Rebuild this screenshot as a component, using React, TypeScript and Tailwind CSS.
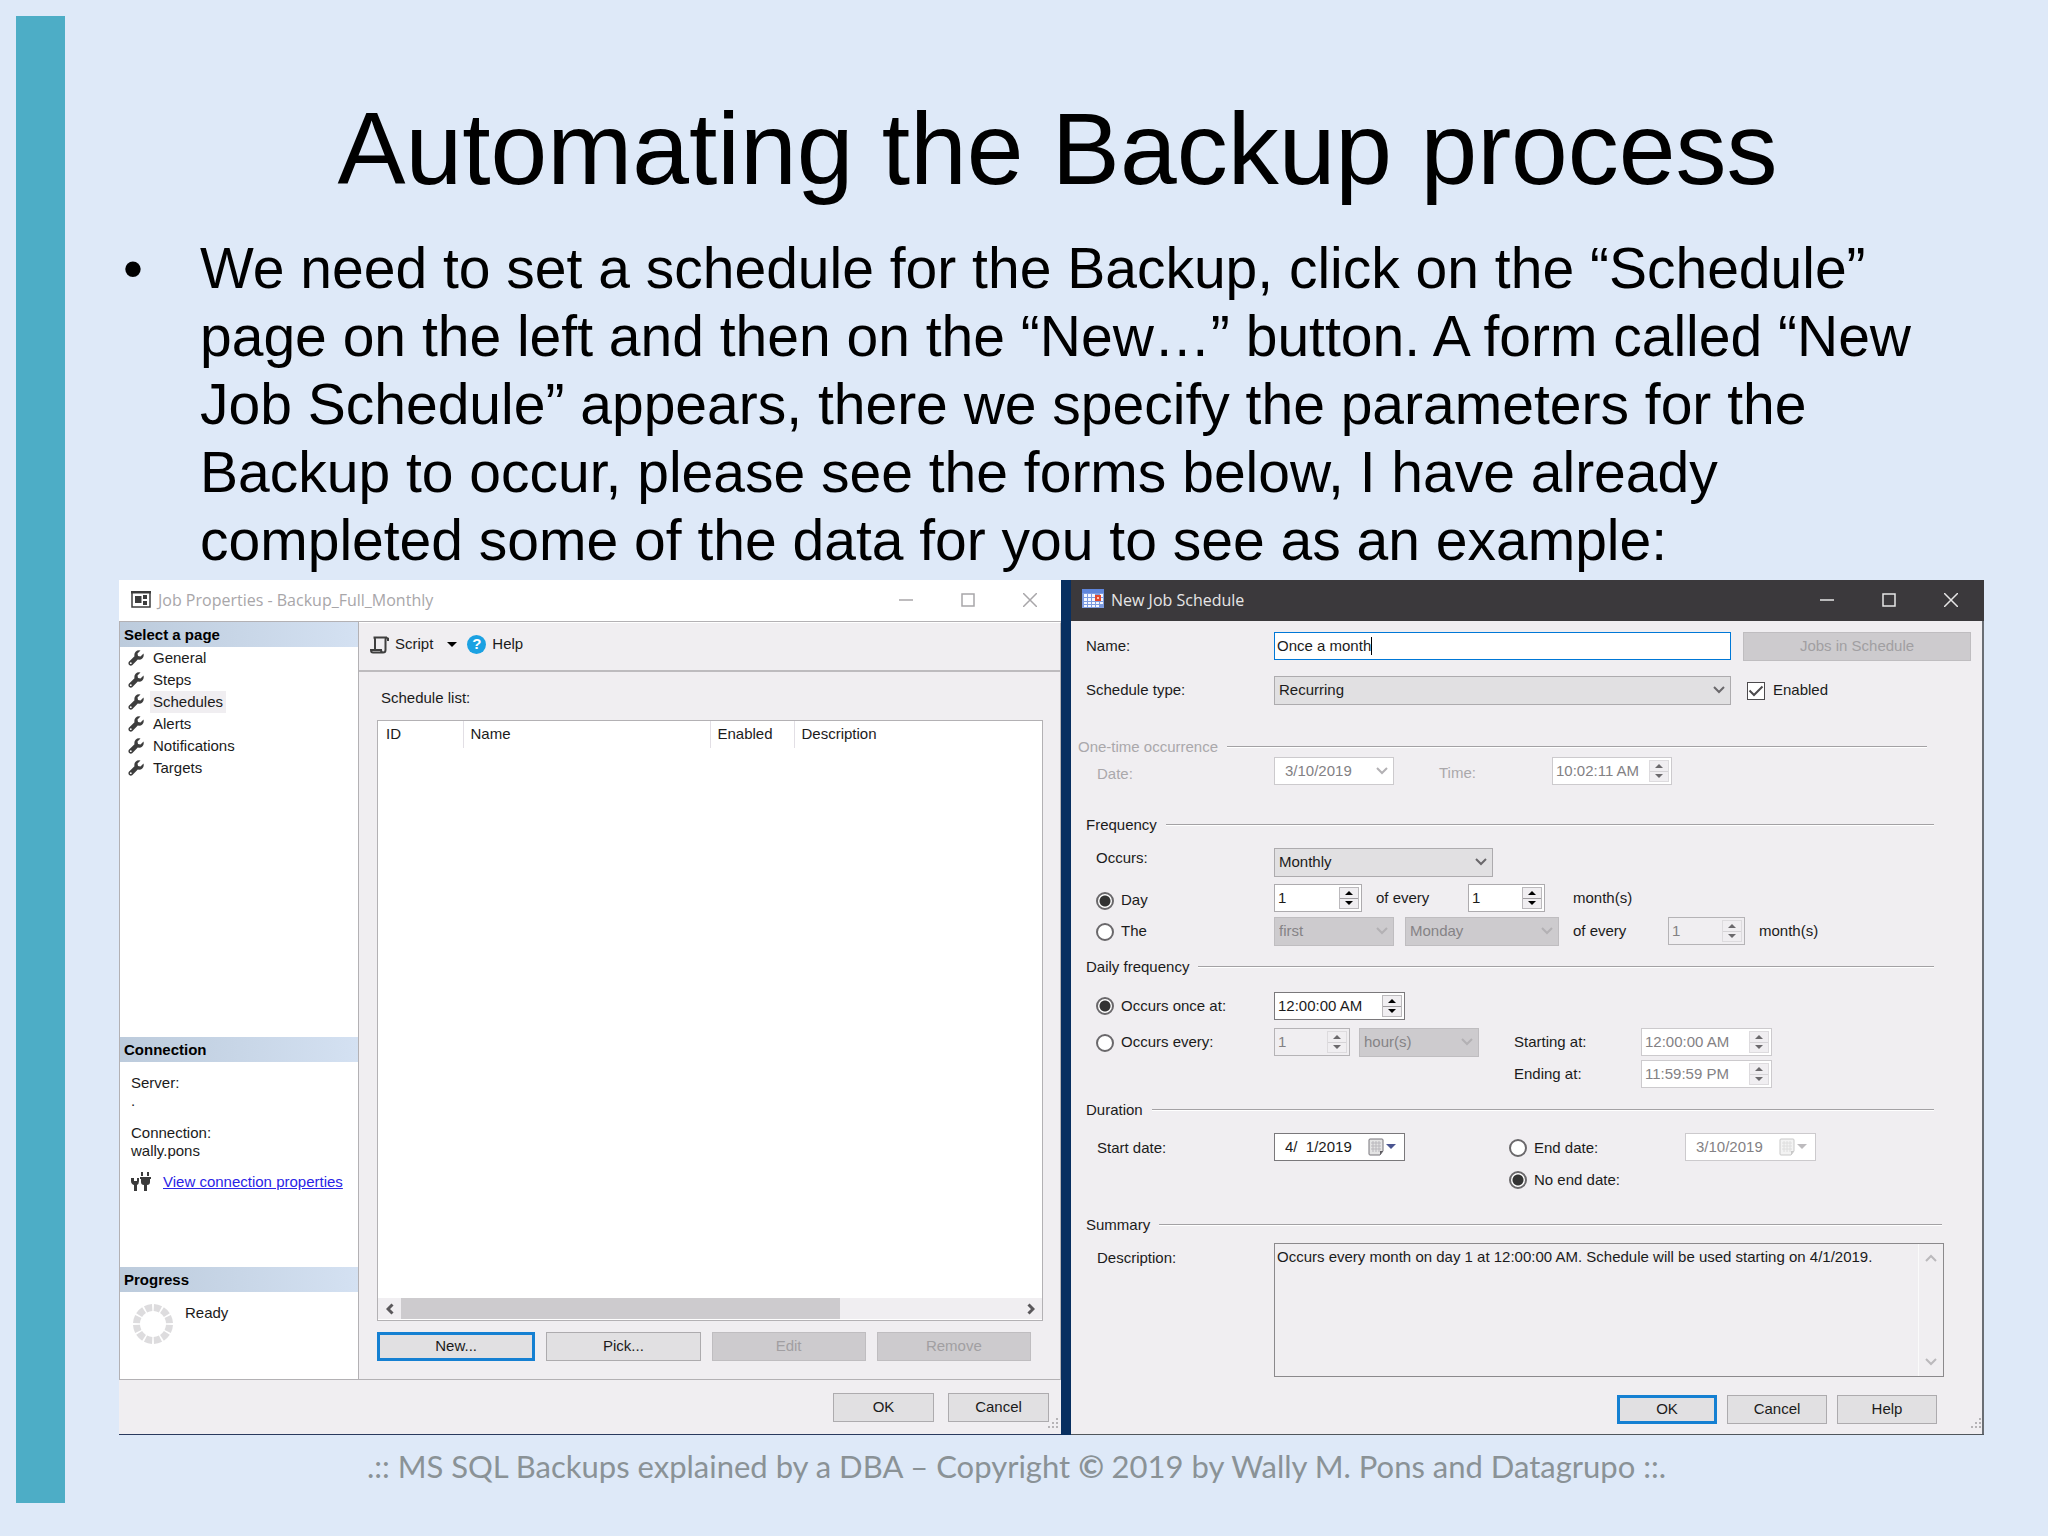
import React from 'react';

const pages = ['General', 'Steps', 'Schedules', 'Alerts', 'Notifications', 'Targets'];

const Chevron: React.FC<{ className?: string; up?: boolean }> = ({ className = '', up }) => (
  <svg viewBox="0 0 12 8" className={`h-2 w-3 ${className}`} fill="none" stroke="currentColor" strokeWidth="2">
    <path d={up ? 'M1 7l5-5 5 5' : 'M1 1l5 5 5-5'} />
  </svg>
);

const BoldChevron: React.FC<{ className?: string }> = ({ className = '' }) => (
  <svg viewBox="0 0 12 8" className={`h-2 w-3 ${className}`} fill="none" stroke="currentColor" strokeWidth="3">
    <path d="M1.500 1.500l4.500 4.500 4.500-4.500" />
  </svg>
);

const WrenchIcon = () => (
  <svg viewBox="0 0 16 16" className="h-4 w-4" fill="#3d3d3d">
    <path d="M12.500 0.500L9.500 3.500L10 6L12.500 6.500L15.500 3.500Q16.300 6.500 14.300 8.500Q12.500 10.200 9.800 9.600L4.200 15.200Q2.800 16.200 1.200 15Q-0.200 13.300 0.900 11.800L6.500 6.300Q5.900 3.500 7.600 1.700Q9.600-0.200 12.500 0.500Z" />
    <circle cx="2.800" cy="13.200" r="0.900" fill="#fff" />
  </svg>
);

const JobIcon = () => (
  <svg viewBox="0 0 20 17" className="h-[17px] w-5">
    <path d="M1 2v14h18V2" fill="none" stroke="#3c3c3c" strokeWidth="1.5" />
    <path d="M0 0h20v2.500H0z" fill="#3c3c3c" />
    <path d="M4 5h6.500v7H4zM12 4h4v4h-4zM12 10h4v4h-4z" fill="#3c3c3c" />
  </svg>
);

const ScriptIcon = () => (
  <svg viewBox="0 0 20 18" className="h-[18px] w-5" fill="none" stroke="#3f3f3f" strokeWidth="2">
    <path d="M5 13V3.500Q5 1.500 3.500 1.500H17Q15.500 1.500 15.500 4V14Q15.500 16.500 13 16.500H3Q1 16.500 1 14H11Q11 16.500 13.500 16.500" />
    <path d="M17 1v4h2V2z" fill="#3f3f3f" stroke="none" />
  </svg>
);

const ScheduleIcon = () => (
  <svg viewBox="0 0 22 21" className="h-[21px] w-[22px]">
    <path d="M0 0h22v19H0z" fill="#7c9be0" />
    <path d="M0 0h22v4H0z" fill="#5f86dc" />
    <path d="M2 5h3v3H2zM6 5h3v3H6zM10 5h3v3h-3zM18 5h3v3h-3zM2 9h3v3H2zM6 9h3v3H6zM10 9h3v3h-3zM18 9h3v3h-3zM2 13h3v2H2zM6 13h3v2H6zM10 13h3v2h-3zM14 13h3v2h-3zM18 13h3v2h-3zM2 16h3v2H2zM6 16h3v2H6zM10 16h3v2h-3zM14 16h3v2h-3z" fill="#f4f7ff" />
    <path d="M13 6h6v6h-6z" fill="#e2492f" />
    <path d="M15 8h2v2h-2z" fill="#ffc2a8" />
  </svg>
);

const ConnectionIcon = () => (
  <svg viewBox="0 0 20 20" className="h-5 w-5" fill="#3b3b3b">
    <path d="M0 6v3q0 3 3 4v6h3v-6q2-1 2-4V6H6v3H3V6z" />
    <path d="M10 0h2v4h-2zM16 0h2v4h-2zM9 5h11v2h-1v3q0 3-3 3v6h-3v-6q-3 0-3-3V7H9z" />
  </svg>
);

const CalendarIcon: React.FC<{ disabled?: boolean }> = ({ disabled }) => (
  <svg viewBox="0 0 28 18" className="h-[18px] w-7 shrink-0">
    <path d="M1 2q0-1 1-1h12q1 0 1 1v11l-3 4H2q-1 0-1-1z" fill={disabled ? '#f3f3f3' : '#e4e4e4'} stroke={disabled ? '#c9c9c9' : '#77747a'} />
    <path d="M3 5h10M3 8h10M3 11h10M5 3v11M8 3v11M11 3v11" stroke={disabled ? '#dedede' : '#b9b7bc'} />
    <path d="M15 13h-3v4z" fill={disabled ? '#c9c9c9' : '#5d5b60'} />
    <path d="M18 6h10l-5 5z" fill={disabled ? '#bdbbbe' : '#4a5590'} />
  </svg>
);

const Grip = () => (
  <svg viewBox="0 0 12 12" className="absolute right-0.5 bottom-1 h-3 w-3" fill="#b5b3b6">
    <path d="M9 0h2v2H9zM5 4h2v2H5zM9 4h2v2H9zM1 8h2v2H1zM5 8h2v2H5zM9 8h2v2H9z" />
  </svg>
);

const WindowControls = () => (
  <div className="flex self-stretch">
    <button type="button" aria-label="Minimize" className="flex w-[62px] items-center justify-center">
      <svg viewBox="0 0 14 14" className="h-3.5 w-3.5" stroke="currentColor" strokeWidth="1.5"><path d="M0 7h14" /></svg>
    </button>
    <button type="button" aria-label="Maximize" className="flex w-[62px] items-center justify-center">
      <svg viewBox="0 0 14 14" className="h-3.5 w-3.5" fill="none" stroke="currentColor" strokeWidth="1.5"><path d="M1 1h12v12H1z" /></svg>
    </button>
    <button type="button" aria-label="Close" className="flex w-[62px] items-center justify-center">
      <svg viewBox="0 0 14 14" className="h-3.5 w-3.5" stroke="currentColor" strokeWidth="1.5"><path d="M0 0l14 14M14 0L0 14" /></svg>
    </button>
  </div>
);

interface ButtonProps {
  children: React.ReactNode;
  className: string;
  primary?: boolean;
  disabled?: boolean;
}

const Button: React.FC<ButtonProps> = ({ children, className, primary, disabled }) => {
  const look = disabled
    ? 'border border-[#bfbdc0] bg-[#cdcbce] text-[#a19fa2]'
    : primary
      ? 'border-[3px] border-[#1580d2] bg-[#e1e0e2]'
      : 'border border-[#adabae] bg-[#e1e0e2]';
  return (
    <button type="button" disabled={disabled} className={`h-[29px] ${look} ${className}`}>
      {children}
    </button>
  );
};

interface SelectProps {
  id?: string;
  label?: string;
  value: string;
  className: string;
  disabled?: boolean;
  plain?: boolean;
}

const Select: React.FC<SelectProps> = ({ id, label, value, className, disabled, plain }) => {
  const look = plain
    ? 'h-7 border-[#cccacd] bg-white pl-2.5 text-[#838184]'
    : disabled
      ? 'h-[29px] border-[#bfbdc0] bg-[#cdcbce] pl-1 text-[#858386]'
      : 'h-[29px] border-[#adabae] bg-[#e1e0e2] pl-1 text-[#1b1b1b]';
  return (
    <div className={`relative ${className}`}>
      <select id={id} aria-label={label} disabled={disabled} defaultValue={value} className={`w-full appearance-none border opacity-100 ${look}`}>
        <option>{value}</option>
      </select>
      <Chevron className={`pointer-events-none absolute top-2.5 right-1.5 ${disabled ? 'text-[#b3b1b4]' : 'text-[#6a686b]'}`} />
    </div>
  );
};

interface SpinnerProps {
  label: string;
  value: string;
  className: string;
  tone?: 'normal' | 'dark' | 'disabled' | 'gray';
}

const Spinner: React.FC<SpinnerProps> = ({ label, value, className, tone = 'normal' }) => {
  const off = tone === 'disabled' || tone === 'gray';
  const look = {
    normal: 'border-[#adabae] bg-white text-[#1b1b1b]',
    dark: 'border-[#7a787b] bg-white text-[#1b1b1b]',
    disabled: 'border-[#cccacd] bg-white text-[#838184]',
    gray: 'border-[#b5b3b6] bg-[#f0eef1] text-[#838184]',
  }[tone];
  return (
    <div className={`flex h-7 border pr-0.5 ${look} ${className}`}>
      <input aria-label={label} disabled={off} defaultValue={value} className="min-w-0 flex-1 bg-transparent pl-[3px]" />
      <div className={`my-0.5 flex w-5 flex-col border ${off ? 'border-[#dddbde] text-[#6b696c]' : 'border-[#bbb9bc] text-black'}`}>
        <button type="button" aria-label={`${label} up`} disabled={off} className="flex flex-1 items-center justify-center bg-[#f0eef1]">
          <svg viewBox="0 0 8 4" className="h-1 w-2" fill="currentColor"><path d="M0 4l4-4 4 4z" /></svg>
        </button>
        <button type="button" aria-label={`${label} down`} disabled={off} className={`flex flex-1 items-center justify-center border-t bg-[#f0eef1] ${off ? 'border-[#d5d3d6]' : 'border-[#9d9b9e]'}`}>
          <svg viewBox="0 0 8 4" className="h-1 w-2" fill="currentColor"><path d="M0 0l4 4 4-4z" /></svg>
        </button>
      </div>
    </div>
  );
};

const DateBox: React.FC<{ id: string; label?: string; value: string; disabled?: boolean }> = ({ id, label, value, disabled }) => (
  <div className={`flex h-7 w-[131px] items-center border bg-white pr-2 ${disabled ? 'border-[#cccacd] text-[#838184]' : 'border-[#7a787b]'}`}>
    <input id={id} aria-label={label} disabled={disabled} defaultValue={value} className="min-w-0 flex-1 bg-transparent pl-2.5 whitespace-pre" />
    <CalendarIcon disabled={disabled} />
  </div>
);

const Radio: React.FC<{ name: string; label: string; checked?: boolean; className?: string }> = ({ name, label, checked, className = '' }) => (
  <label className={`flex items-center gap-[7px] ${className}`}>
    <input
      type="radio"
      name={name}
      defaultChecked={checked}
      className="h-[18px] w-[18px] appearance-none rounded-full border-2 border-[#6a686b] bg-white checked:bg-[radial-gradient(circle,#333_0_5px,#fff_6px)]"
    />
    {label}
  </label>
);

const Heading: React.FC<{ children: string; className: string }> = ({ children, className }) => (
  <div className={`flex h-5 items-center gap-[9px] ${className}`}>
    <h3>{children}</h3>
    <div className="h-0.5 flex-1 border-t border-[#a3a1a4] bg-white" />
  </div>
);

const PanelHeader: React.FC<{ children: string }> = ({ children }) => (
  <h3 className="h-[25px] bg-linear-to-r from-[#bccbdc] to-[#d4e1f2] pl-1 leading-[25px] font-bold text-black">{children}</h3>
);

const JobProperties = () => (
  <section className="relative flex flex-[942] flex-col border-b border-[#2a3a5e] bg-[#f0eef1]">
    <header className="flex h-[41px] items-center bg-white pb-0.5 pl-3 text-[#a8a6a9]">
      <JobIcon />
      <h2 className="flex-1 pl-[7px] font-['Open_Sans','Noto_Sans',sans-serif] text-base">Job Properties - Backup_Full_Monthly</h2>
      <WindowControls />
    </header>
    <div className="flex flex-1 border-y border-[#b3b1b4]">
      <aside className="flex w-60 flex-col border-x border-[#b3b1b4] bg-white">
        <PanelHeader>Select a page</PanelHeader>
        <ul className="flex-1">
          {pages.map((page) => (
            <li key={page} className="flex h-[22px] items-center gap-1.5 pl-2">
              <WrenchIcon />
              <a href="#" className={`px-[3px] leading-[22px] ${page === 'Schedules' ? 'bg-[#f0eef1]' : ''}`}>{page}</a>
            </li>
          ))}
        </ul>
        <PanelHeader>Connection</PanelHeader>
        <div className="flex h-[205px] flex-col pt-3 pl-[11px] leading-[18px]">
          <p>Server:</p>
          <p>.</p>
          <p className="mt-3.5">Connection:</p>
          <p>wally.pons</p>
          <div className="mt-3 flex items-center gap-3">
            <ConnectionIcon />
            <a href="#" className="text-[#2a24e6] underline">View connection properties</a>
          </div>
        </div>
        <PanelHeader>Progress</PanelHeader>
        <div className="flex h-[87px] gap-[11px] pt-[11px] pl-3">
          <svg viewBox="0 0 42 42" className="h-[42px] w-[42px]">
            <circle cx="21" cy="21" r="16.500" fill="none" stroke="#dddcde" strokeWidth="7" pathLength="120" strokeDasharray="8 2" strokeDashoffset="-1" />
          </svg>
          <span className="leading-5">Ready</span>
        </div>
      </aside>
      <div className="flex flex-1 flex-col border-t border-r border-t-white border-r-[#b3b1b4]">
        <div className="flex h-[49px] items-center border-b-2 border-[#bdbbbe] pb-1 pl-[11px]">
          <button type="button" className="flex items-center">
            <ScriptIcon />
            <span className="pl-[5px]">Script</span>
            <svg viewBox="0 0 10 5" className="ml-3.5 h-[5px] w-2.5"><path d="M0 0h10L5 5z" /></svg>
          </button>
          <button type="button" className="ml-2.5 flex items-center gap-1.5">
            <span className="flex h-[19px] w-[19px] items-center justify-center rounded-full bg-[#1ba1e2] font-bold text-white">?</span>
            Help
          </button>
        </div>
        <div className="flex flex-1 flex-col pt-4 pr-[17px] pb-[18px] pl-[18px]">
          <p className="pl-1 leading-5">Schedule list:</p>
          <div className="mt-3 flex flex-1 flex-col border border-[#b3b1b4] bg-white">
            <table className="w-full table-fixed text-left">
              <thead>
                <tr className="h-[27px]">
                  <th className="w-[85px] border-r border-[#e2dfe5] pl-2 font-normal">ID</th>
                  <th className="border-r border-[#e2dfe5] pl-[7px] font-normal">Name</th>
                  <th className="w-[84px] border-r border-[#e2dfe5] pl-[7px] font-normal">Enabled</th>
                  <th className="w-[248px] pl-[7px] font-normal">Description</th>
                </tr>
              </thead>
            </table>
            <div className="mt-auto mb-px flex h-[21px] bg-[#f0eef1] text-[#5a585b]">
              <button type="button" aria-label="Scroll left" className="flex w-[23px] items-center justify-center">
                <BoldChevron className="rotate-90" />
              </button>
              <div className="flex-1"><div className="h-full w-[71%] bg-[#cdcbce]" /></div>
              <button type="button" aria-label="Scroll right" className="flex w-[23px] items-center justify-center">
                <BoldChevron className="-rotate-90" />
              </button>
            </div>
          </div>
          <div className="mt-[11px] mr-3 flex gap-[11px]">
            <Button primary className="flex-1">New...</Button>
            <Button className="flex-1">Pick...</Button>
            <Button disabled className="flex-1">Edit</Button>
            <Button disabled className="flex-1">Remove</Button>
          </div>
        </div>
      </div>
    </div>
    <footer className="flex h-[54px] items-start justify-end gap-3.5 pt-[13px] pr-3">
      <Button className="w-[101px]">OK</Button>
      <Button className="w-[101px]">Cancel</Button>
    </footer>
    <Grip />
  </section>
);

const NewJobSchedule = () => (
  <section className="relative flex flex-[913] flex-col border-b border-[#50565c] bg-[#f0eef1]">
    <header className="flex h-[41px] items-center bg-[#3b393c] pr-0.5 pb-0.5 pl-[11px] text-[#e6e6e6]">
      <ScheduleIcon />
      <h2 className="flex-1 pl-[7px] font-['Open_Sans','Noto_Sans',sans-serif] text-base">New Job Schedule</h2>
      <WindowControls />
    </header>
    <form className="flex flex-1 flex-col border-r-2 border-[#6a6e74] pt-[11px] pr-[11px] pb-2.5 pl-[15px]">
      <div className="flex">
        <label htmlFor="name" className="w-[188px] leading-7">Name:</label>
        <div className="flex h-7 flex-1 items-center border border-[#0078d7] bg-white pl-0.5">
          <input id="name" defaultValue="Once a month" className="field-sizing-content outline-none" />
          <span className="h-[18px] w-px bg-black" />
        </div>
        <Button disabled className="ml-3 w-[228px]">Jobs in Schedule</Button>
      </div>
      <div className="mt-[15px] flex">
        <label htmlFor="type" className="w-[188px] leading-7">Schedule type:</label>
        <Select id="type" value="Recurring" className="flex-1" />
        <label className="ml-3 flex w-[228px] items-center gap-2 pl-1">
          <span className="relative h-[18px] w-[18px]">
            <input type="checkbox" defaultChecked className="block h-[18px] w-[18px] appearance-none border border-[#4c4a4d] bg-white" />
            <svg viewBox="0 0 18 18" className="pointer-events-none absolute inset-0" fill="none" stroke="#4c4a4d" strokeWidth="2"><path d="M2.500 8.500l4.500 4.500 8.500-8.500" /></svg>
          </span>
          Enabled
        </label>
      </div>

      {/* One-time occurrence */}
      <Heading className="mt-8 mr-11 -ml-2 text-[#aaa8ab]">One-time occurrence</Heading>
      <div className="flex h-[34px] text-[#aaa8ab]">
        <label htmlFor="once-date" className="w-[188px] pl-[11px] leading-[34px]">Date:</label>
        <Select id="once-date" plain disabled value="3/10/2019" className="w-[120px]" />
        <span className="ml-[45px] w-[113px] leading-8">Time:</span>
        <Spinner label="Time" tone="disabled" value="10:02:11 AM" className="w-[120px]" />
      </div>

      {/* Frequency */}
      <Heading className="mt-6 mr-[37px]">Frequency</Heading>
      <div className="mt-[13px] flex">
        <label htmlFor="occurs" className="w-[188px] pl-2.5 leading-5">Occurs:</label>
        <Select id="occurs" value="Monthly" className="w-[219px]" />
      </div>
      <div className="mt-[7px] flex h-[33px]">
        <Radio name="frequency" label="Day" checked className="w-[188px] pl-2.5" />
        <Spinner label="Day of month" value="1" className="w-[88px]" />
        <span className="ml-3.5 w-[92px] leading-7">of every</span>
        <Spinner label="Months" value="1" className="w-[77px]" />
        <span className="ml-7 leading-7">month(s)</span>
      </div>
      <div className="flex">
        <Radio name="frequency" label="The" className="w-[188px] pl-2.5" />
        <Select label="Week" disabled value="first" className="w-[120px]" />
        <Select label="Weekday" disabled value="Monday" className="ml-[11px] w-[154px]" />
        <span className="ml-3.5 w-[95px] leading-7">of every</span>
        <Spinner label="Months between" tone="gray" value="1" className="w-[77px]" />
        <span className="ml-3.5 leading-7">month(s)</span>
      </div>

      {/* Daily frequency */}
      <Heading className="mt-[11px] mr-[37px]">Daily frequency</Heading>
      <div className="mt-[15px] flex">
        <Radio name="daily" label="Occurs once at:" checked className="w-[188px] pl-2.5" />
        <Spinner label="Occurs once at" tone="dark" value="12:00:00 AM" className="w-[131px]" />
      </div>
      <div className="mt-2 flex">
        <Radio name="daily" label="Occurs every:" className="w-[188px] pl-2.5" />
        <Spinner label="Interval" tone="gray" value="1" className="w-[76px]" />
        <Select label="Unit" disabled value="hour(s)" className="ml-[9px] w-[120px]" />
        <span className="ml-[35px] w-[127px] leading-7">Starting at:</span>
        <Spinner label="Starting at" tone="disabled" value="12:00:00 AM" className="w-[131px]" />
      </div>
      <div className="mt-[3px] flex pl-[428px]">
        <span className="w-[127px] leading-7">Ending at:</span>
        <Spinner label="Ending at" tone="disabled" value="11:59:59 PM" className="w-[131px]" />
      </div>

      {/* Duration */}
      <Heading className="mt-3 mr-[37px]">Duration</Heading>
      <div className="mt-[13px] flex">
        <label htmlFor="start" className="w-[188px] pl-[11px] leading-[30px]">Start date:</label>
        <DateBox id="start" value="4/  1/2019" />
        <Radio name="end" label="End date:" className="ml-[104px] w-44" />
        <DateBox id="end-date" label="End date" value="3/10/2019" disabled />
      </div>
      <div className="mt-[3px] flex h-7 pl-[423px]">
        <Radio name="end" label="No end date:" checked />
      </div>

      {/* Summary */}
      <Heading className="mt-[21px] mr-[29px]">Summary</Heading>
      <div className="mt-2 mr-[27px] flex h-[134px]">
        <label htmlFor="description" className="w-[188px] pl-[11px] leading-[30px]">Description:</label>
        <div className="flex flex-1 border border-[#8b898c]">
          <textarea
            id="description"
            readOnly
            className="flex-1 resize-none bg-transparent py-1 pl-0.5 leading-[18px]"
            defaultValue="Occurs every month on day 1 at 12:00:00 AM. Schedule will be used starting on 4/1/2019."
          />
          <div className="flex w-[25px] flex-col items-center justify-between border-l border-[#fafafa] py-2.5 text-[#bbb9bc]">
            <Chevron up />
            <Chevron />
          </div>
        </div>
      </div>
      <div className="mt-auto mr-[34px] flex justify-end gap-2.5">
        <Button primary className="w-[100px]">OK</Button>
        <Button className="w-[100px]">Cancel</Button>
        <Button className="w-[100px]">Help</Button>
      </div>
    </form>
    <Grip />
  </section>
);

const App: React.FC = () => {
  return (
    <div className="flex min-h-screen bg-[#dee9f8] pl-4 font-['Liberation_Sans',Arial,sans-serif] text-black">
      <div className="mt-4 mb-[33px] w-[49px] bg-[#4dadc6]" />
      <main className="flex flex-1 flex-col pt-[89px]">
        <div className="mr-16 ml-[54px]">
          <h1 className="pl-3 text-center text-[102px] leading-[120px]">Automating the Backup process</h1>
          <ul className="mt-[25px] mr-6 list-none text-[57px] leading-[68px]">
            <li className="flex">
              <span className="w-[81px] shrink-0 pl-1">•</span>
              <p>
                We need to set a schedule for the Backup, click on the “Schedule” page on the left and then on the
                “New…” button. A form called “New Job Schedule” appears, there we specify the parameters for the
                Backup to occur, please see the forms below, I have already completed some of the data for you to see
                as an example:
              </p>
            </li>
          </ul>
        </div>
        <div className="mt-1.5 mr-16 ml-[54px] flex h-[855px] text-[15px] text-[#1b1b1b]">
          <JobProperties />
          <div className="w-2.5 bg-[#082f60]" />
          <NewJobSchedule />
        </div>
        <footer className="pr-20 text-center font-['Lato',sans-serif] text-[31px] leading-[62px] text-[#8a9296]">
          .:: MS SQL Backups explained by a DBA – Copyright <span className="font-bold italic">©</span> 2019 by Wally M. Pons and Datagrupo ::.
        </footer>
      </main>
    </div>
  );
};

export default App;
